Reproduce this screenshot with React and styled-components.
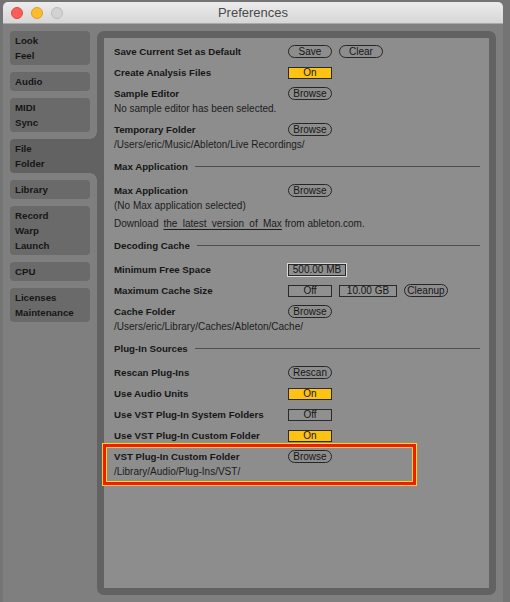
import React from "react";
import styled, { createGlobalStyle } from "styled-components";

const Global = createGlobalStyle`
  html, body { margin: 0; padding: 0; }
  body {
    width: 510px;
    height: 602px;
    overflow: hidden;
    background: #747474;
    font-family: "Liberation Sans", Arial, sans-serif;
  }
`;

const Window = styled.div`
  margin: 2px 7px 0 3px;
  height: 600px;
  display: flex;
  flex-direction: column;
  background: #7f7f7f;
  border-radius: 5px 5px 0 0;
  overflow: hidden;
`;

const TitleBar = styled.div`
  height: 21px;
  flex: none;
  display: grid;
  grid-template-columns: 1fr auto 1fr;
  align-items: center;
  padding: 0 8px;
  background: linear-gradient(#ececec, #d6d6d6);
  border-bottom: 1px solid #a9a9a9;
`;

const Lights = styled.div`
  display: flex;
  gap: 8px;
`;

const Light = styled.span`
  width: 12px;
  height: 12px;
  box-sizing: border-box;
  border-radius: 50%;
  background: ${(p) => p.$bg};
  border: 1px solid ${(p) => p.$bd};
`;

const Title = styled.div`
  font-family: "Liberation Sans", Arial, sans-serif;
  font-size: 13px;
  color: #4a4a4a;
`;

const Body = styled.div`
  flex: 1;
  display: flex;
  min-height: 0;
`;

const Sidebar = styled.div`
  width: 87px;
  flex: none;
  padding: 7px 0 0 7px;
  display: flex;
  flex-direction: column;
  gap: 7px;
`;

const Tab = styled.div`
  position: relative;
  width: ${(p) => (p.$selected ? "87px" : "80px")};
  box-sizing: border-box;
  padding: 2px 5px;
  background: ${(p) => (p.$selected ? "#626262" : "#6a6a6a")};
  border-radius: ${(p) => (p.$selected ? "4px 0 0 4px" : "4px")};
  font-weight: bold;
  font-size: 9.7px;
  line-height: 15px;
  color: #161616;

  ${(p) =>
    p.$selected &&
    `
    &::before, &::after {
      content: "";
      position: absolute;
      right: 0;
      width: 7px;
      height: 7px;
    }
    &::before {
      top: -7px;
      background: radial-gradient(circle at 0 0, transparent 6.5px, #626262 7px);
    }
    &::after {
      bottom: -7px;
      background: radial-gradient(circle at 0 100%, transparent 6.5px, #626262 7px);
    }
  `}
`;

const TabLine = styled.div``;

const Frame = styled.div`
  flex: 1;
  margin: 7px 7px 7px 0;
  padding: 7px;
  background: #626262;
  border-radius: 7px;
  display: flex;
`;

const Panel = styled.div`
  flex: 1;
  background: #8d8d8d;
  padding: 3px 9px 0 10px;
`;

const Item = styled.div`
  position: relative;
  padding: 3px 0;

  ${(p) =>
    p.$highlight &&
    `
    &::after {
      content: "";
      position: absolute;
      left: -11px;
      top: -2.5px;
      width: 313px;
      height: 41px;
      box-sizing: border-box;
      border: 3px solid #f01b0c;
      box-shadow: 0 0 0 1px #ffd21c, inset 0 0 0 1px #ffd21c;
      pointer-events: none;
    }
  `}
`;

const Line = styled.div`
  display: grid;
  grid-template-columns: 174px auto;
  align-items: center;
  height: 15px;
`;

const Label = styled.div`
  font-weight: bold;
  font-size: 9.7px;
  color: #161616;
  white-space: nowrap;
`;

const Controls = styled.div`
  display: flex;
  align-items: center;
  gap: 7px;
`;

const Sub = styled.div`
  font-size: 10px;
  line-height: 15px;
  color: #1c1c1c;
  white-space: nowrap;
  margin-top: ${(p) => p.$mt || 0}px;
`;

const Link = styled.span`
  word-spacing: 2.5px;
  text-decoration: underline;
  text-underline-offset: 2px;
  margin-left: 5px;
`;

const Header = styled.div`
  display: flex;
  align-items: center;
  height: 15px;
  padding: 4px 0 6px;
  gap: 7px;
  font-weight: bold;
  font-size: 9.7px;
  color: #161616;
  white-space: nowrap;

  &::after {
    content: "";
    flex: 1;
    height: 1px;
    background: #4e4e4e;
  }
`;

const Pill = styled.div`
  width: 44px;
  height: 13px;
  box-sizing: border-box;
  border: 1px solid #262626;
  border-radius: 7px;
  font-size: 10px;
  line-height: 11px;
  text-align: center;
  color: #161616;
`;

const Box = styled.div`
  width: ${(p) => (p.$wide ? "58px" : "44px")};
  height: 12px;
  box-sizing: border-box;
  border: 1px solid #2a2a2a;
  background: ${(p) => (p.$on ? "#fdc212" : "#909090")};
  box-shadow: ${(p) => (p.$focus ? "0 0 0 1px #d8d8d8" : "none")};
  font-size: 10px;
  line-height: 10px;
  text-align: center;
  color: #161616;
`;

const tabs = [
  ["Look", "Feel"],
  ["Audio"],
  ["MIDI", "Sync"],
  ["File", "Folder"],
  ["Library"],
  ["Record", "Warp", "Launch"],
  ["CPU"],
  ["Licenses", "Maintenance"],
];

export default function App() {
  return (
    <>
      <Global />
      <Window>
        <TitleBar>
          <Lights>
            <Light $bg="#fc5f57" $bd="#de4640" />
            <Light $bg="#fdbc2e" $bd="#de9f26" />
            <Light $bg="#d2d2d2" $bd="#bcbcbc" />
          </Lights>
          <Title>Preferences</Title>
          <div />
        </TitleBar>
        <Body>
          <Sidebar>
            {tabs.map((t, i) => (
              <Tab key={i} $selected={i === 3}>
                {t.map((l) => (
                  <TabLine key={l}>{l}</TabLine>
                ))}
              </Tab>
            ))}
          </Sidebar>
          <Frame>
            <Panel>
              <Item>
                <Line>
                  <Label>Save Current Set as Default</Label>
                  <Controls>
                    <Pill>Save</Pill>
                    <Pill>Clear</Pill>
                  </Controls>
                </Line>
              </Item>
              <Item>
                <Line>
                  <Label>Create Analysis Files</Label>
                  <Controls>
                    <Box $on>On</Box>
                  </Controls>
                </Line>
              </Item>
              <Item>
                <Line>
                  <Label>Sample Editor</Label>
                  <Controls>
                    <Pill>Browse</Pill>
                  </Controls>
                </Line>
                <Sub>No sample editor has been selected.</Sub>
              </Item>
              <Item>
                <Line>
                  <Label>Temporary Folder</Label>
                  <Controls>
                    <Pill>Browse</Pill>
                  </Controls>
                </Line>
                <Sub>/Users/eric/Music/Ableton/Live Recordings/</Sub>
              </Item>

              <Header>Max Application</Header>
              <Item>
                <Line>
                  <Label>Max Application</Label>
                  <Controls>
                    <Pill>Browse</Pill>
                  </Controls>
                </Line>
                <Sub>(No Max application selected)</Sub>
                <Sub $mt={3}>
                  Download<Link>the latest version of Max</Link> from ableton.com.
                </Sub>
              </Item>

              <Header>Decoding Cache</Header>
              <Item>
                <Line>
                  <Label>Minimum Free Space</Label>
                  <Controls>
                    <Box $wide $focus>500.00 MB</Box>
                  </Controls>
                </Line>
              </Item>
              <Item>
                <Line>
                  <Label>Maximum Cache Size</Label>
                  <Controls>
                    <Box>Off</Box>
                    <Box $wide>10.00 GB</Box>
                    <Pill>Cleanup</Pill>
                  </Controls>
                </Line>
              </Item>
              <Item>
                <Line>
                  <Label>Cache Folder</Label>
                  <Controls>
                    <Pill>Browse</Pill>
                  </Controls>
                </Line>
                <Sub>/Users/eric/Library/Caches/Ableton/Cache/</Sub>
              </Item>

              <Header>Plug-In Sources</Header>
              <Item>
                <Line>
                  <Label>Rescan Plug-Ins</Label>
                  <Controls>
                    <Pill>Rescan</Pill>
                  </Controls>
                </Line>
              </Item>
              <Item>
                <Line>
                  <Label>Use Audio Units</Label>
                  <Controls>
                    <Box $on>On</Box>
                  </Controls>
                </Line>
              </Item>
              <Item>
                <Line>
                  <Label>Use VST Plug-In System Folders</Label>
                  <Controls>
                    <Box>Off</Box>
                  </Controls>
                </Line>
              </Item>
              <Item>
                <Line>
                  <Label>Use VST Plug-In Custom Folder</Label>
                  <Controls>
                    <Box $on>On</Box>
                  </Controls>
                </Line>
              </Item>
              <Item $highlight>
                <Line>
                  <Label>VST Plug-In Custom Folder</Label>
                  <Controls>
                    <Pill>Browse</Pill>
                  </Controls>
                </Line>
                <Sub>/Library/Audio/Plug-Ins/VST/</Sub>
              </Item>
            </Panel>
          </Frame>
        </Body>
      </Window>
    </>
  );
}
